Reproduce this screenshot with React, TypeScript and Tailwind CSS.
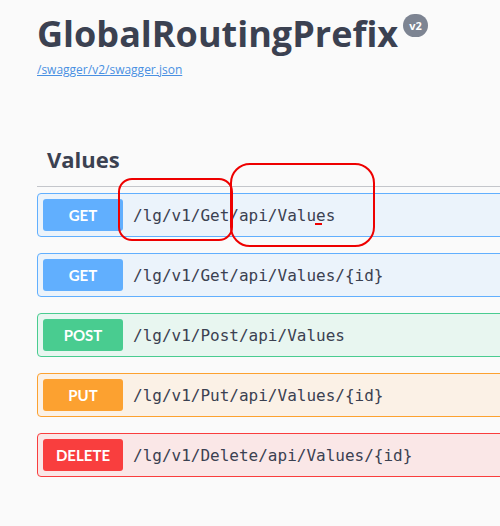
import React from "react";

type Op = {
  method: string;
  path: string;
  badge: string;
  border: string;
  bg: string;
};

const ops: Op[] = [
  { method: "GET", path: "/lg/v1/Get/api/Values", badge: "bg-[#61affe]", border: "border-[#61affe]", bg: "bg-[#ebf3fb]" },
  { method: "GET", path: "/lg/v1/Get/api/Values/{id}", badge: "bg-[#61affe]", border: "border-[#61affe]", bg: "bg-[#ebf3fb]" },
  { method: "POST", path: "/lg/v1/Post/api/Values", badge: "bg-[#49cc90]", border: "border-[#49cc90]", bg: "bg-[#e8f6f0]" },
  { method: "PUT", path: "/lg/v1/Put/api/Values/{id}", badge: "bg-[#fca130]", border: "border-[#fca130]", bg: "bg-[#fbf1e6]" },
  { method: "DELETE", path: "/lg/v1/Delete/api/Values/{id}", badge: "bg-[#f93e3e]", border: "border-[#f93e3e]", bg: "bg-[#fae7e7]" },
];

export default function App() {
  return (
    <div className="relative w-[500px] h-[526px] overflow-hidden bg-[#fafafa] font-['Open_Sans',sans-serif] text-[#3b4151]">
      <div className="pl-[37px] w-[620px]">
        <div className="pt-[9px] flex items-start">
          <h2 className="text-[36px] leading-[49px] font-bold text-[#3b4151]">GlobalRoutingPrefix</h2>
          <span className="ml-[5px] mt-[5px] h-[23px] px-[6px] rounded-full bg-[#7d8492] text-white text-[11px] font-bold leading-[23px]">v2</span>
        </div>
        <a className="block mt-[4px] text-[12px] leading-[16px] text-[#4990e2] underline">/swagger/v2/swagger.json</a>

        <div className="mt-[66px]">
          <div className="flex items-start h-[43px] pl-[10px] border-b border-[#c4c6cb]">
            <h3 className="text-[22px] font-bold leading-[30px]">Values</h3>
          </div>
          <div className="mt-[6px] flex flex-col gap-[16px]">
            {ops.map((op, i) => (
              <div key={i} className={`flex items-center h-[44px] p-[5px] border rounded-[4px] ${op.border} ${op.bg}`}>
                <span className={`w-[80px] h-[32px] flex items-center justify-center rounded-[3px] text-white text-[15px] font-bold font-['Lato',sans-serif] ${op.badge}`}>
                  {op.method}
                </span>
                <span className="pl-[10px] pt-[2px] font-['DejaVu_Sans_Mono',monospace] text-[16px] text-[#3b4151]">{op.path}</span>
              </div>
            ))}
          </div>
        </div>
      </div>

      {/* annotations */}
      <div className="absolute left-[118px] top-[178px] w-[115px] h-[63px] border-2 border-[#ee0000] rounded-[14px]" />
      <div className="absolute left-[230px] top-[163px] w-[145px] h-[84px] border-2 border-[#ee0000] rounded-[20px]" />
      <div className="absolute left-[315px] top-[223px] w-[7px] h-[2px] bg-[#ee0000]" />
    </div>
  );
}
